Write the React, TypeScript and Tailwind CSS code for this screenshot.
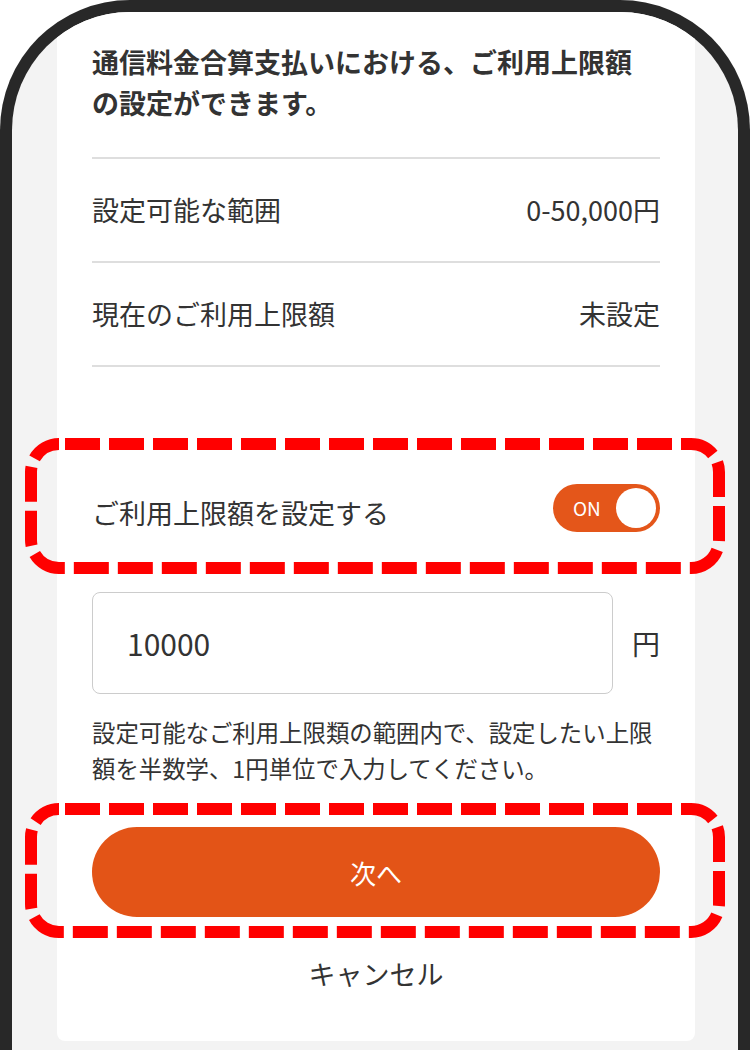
import React, { useState } from 'react';

const DashedFrame: React.FC<{ className: string; height: number }> = ({ className, height }) => (
  <svg
    className={`pointer-events-none absolute ${className}`}
    width={700}
    height={height}
    viewBox={`0 0 700 ${height}`}
  >
    <rect
      x={6}
      y={6}
      width={688}
      height={height - 12}
      rx={28}
      fill="none"
      stroke="#ff0000"
      strokeWidth={12}
      strokeDasharray="35 9"
      strokeDashoffset={-6}
    />
  </svg>
);

const App: React.FC = () => {
  const [enabled, setEnabled] = useState(true);
  const [amount, setAmount] = useState('10000');

  return (
    <div
      className="h-[1050px] w-[750px] overflow-hidden bg-white text-[#333333]"
      style={{ fontFamily: '"Noto Sans CJK JP", "Noto Sans", sans-serif' }}
    >
      <div className="h-full rounded-t-[130px] bg-[#282828] px-[12px] pt-[12px]">
        <div className="h-full overflow-hidden rounded-t-[118px] bg-[#f3f3f3]">
          <div className="ml-[45px] mr-[43px] rounded-b-[8px] bg-white px-[35px] pb-[49px] pt-[29px]">
            {/* Heading */}
            <h1 className="text-[27px] font-bold leading-[41px]">
              通信料金合算支払いにおける、ご利用上限額
              <br />
              の設定ができます。
            </h1>

            {/* Info rows */}
            <div className="mt-[34px] h-[2px] bg-[#dedede]" />
            <div className="flex h-[102px] items-center justify-between text-[27px]">
              <span>設定可能な範囲</span>
              <span>0-50,000円</span>
            </div>
            <div className="h-[2px] bg-[#dedede]" />
            <div className="flex h-[102px] items-center justify-between text-[27px]">
              <span>現在のご利用上限額</span>
              <span>未設定</span>
            </div>
            <div className="h-[2px] bg-[#dedede]" />

            {/* Toggle row */}
            <div className="relative mt-[101px] flex h-[90px] items-center justify-between">
              <span className="text-[27px]">ご利用上限額を設定する</span>
              <button
                onClick={() => setEnabled(!enabled)}
                className={`mb-[10px] flex h-[48px] w-[107px] items-center justify-between rounded-full pl-[20px] pr-[4px] ${enabled ? 'bg-[#e4561a]' : 'bg-[#cccccc]'}`}
              >
                <span className="text-[19px] font-normal text-white">ON</span>
                <span className="h-[40px] w-[40px] rounded-full bg-white" />
              </button>
              <DashedFrame className="left-[-67px] top-[-30px]" height={136} />
            </div>

            {/* Amount input */}
            <div className="mt-[34px] flex items-center justify-between">
              <input
                type="text"
                value={amount}
                onChange={(e) => setAmount(e.target.value)}
                className="h-[102px] w-[521px] rounded-[8px] border border-[#cccccc] bg-white pl-[34px] text-[30px] text-[#333333] outline-none"
              />
              <span className="text-[28px]">円</span>
            </div>

            <p className="mt-[20px] text-[23.4px] leading-[36px]">
              設定可能なご利用上限類の範囲内で、設定したい上限額を半数学、1円単位で入力してください。
            </p>

            {/* Next button */}
            <div className="relative mt-[41px]">
              <button className="flex h-[90px] w-full items-center justify-center rounded-full bg-[#e35417] text-[26px] text-white">
                次へ
              </button>
              <DashedFrame className="left-[-67px] top-[-24px]" height={135} />
            </div>

            <div className="mt-[39px] text-center text-[27px] leading-[36px]">キャンセル</div>
          </div>
        </div>
      </div>
    </div>
  );
};

export default App;
